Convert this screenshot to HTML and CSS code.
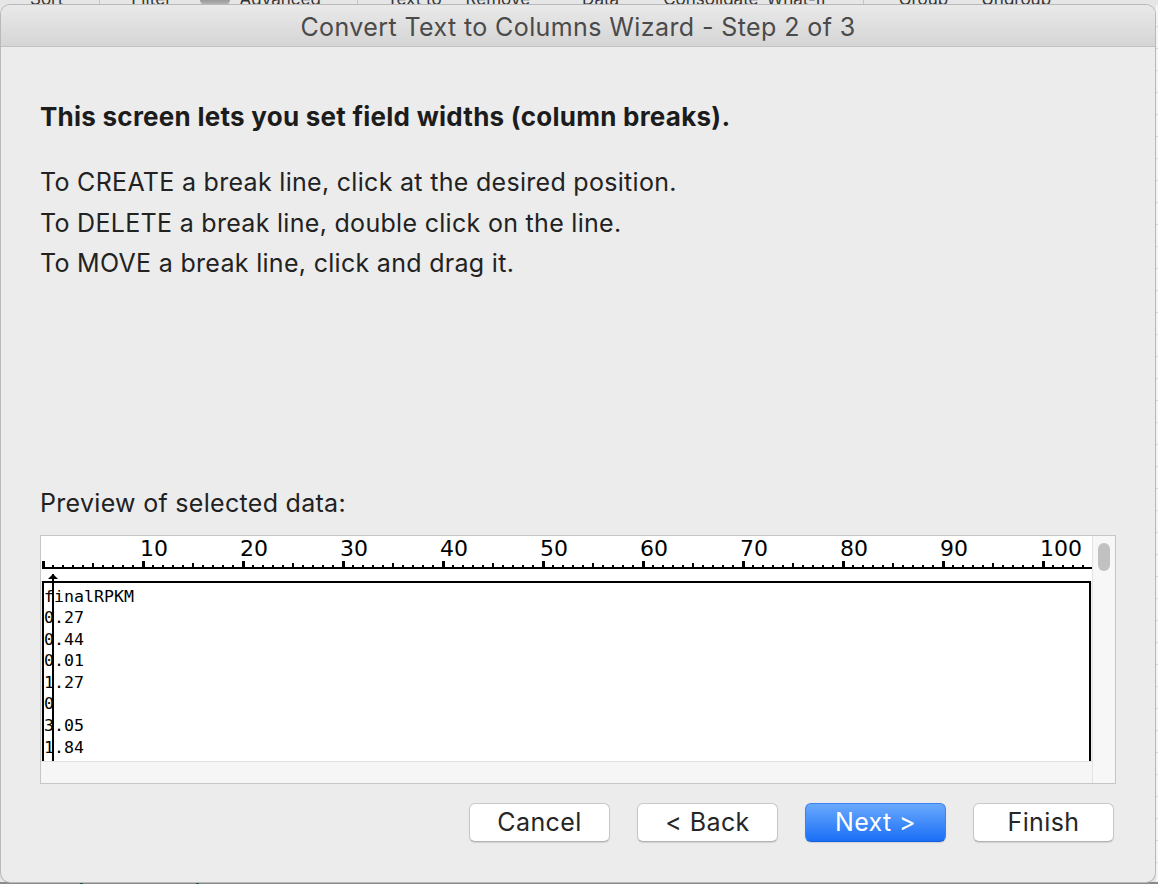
FILE: index.html
```html
<!DOCTYPE html>
<html>
<head>
<meta charset="utf-8">
<title>Convert Text to Columns Wizard - Step 2 of 3</title>
<link rel="stylesheet" href="styles.css">
</head>
<body>
<div class="ribbon">
  <span class="rb r1">Sort</span><span class="rb-div"></span>
  <span class="rb r2">Filter</span><span class="rb-icon"></span>
  <span class="rb r3">Advanced</span><span class="rb-div"></span>
  <span class="rb r4">Text to</span>
  <span class="rb r5">Remove</span>
  <span class="rb r6">Data</span>
  <span class="rb r7">Consolidate</span>
  <span class="rb r8">What-If</span><span class="rb-div"></span>
  <span class="rb r9">Group</span>
  <span class="rb r10">Ungroup</span>
</div>
<div class="stage">
  <div class="window">
    <div class="titlebar">Convert Text to Columns Wizard - Step 2 of 3</div>
    <div class="content">
      <p class="heading">This screen lets you set field widths (column breaks).</p>
      <div class="instructions">
        <p>To CREATE a break line, click at the desired position.</p>
        <p>To DELETE a break line, double click on the line.</p>
        <p>To MOVE a break line, click and drag it.</p>
      </div>
      <p class="preview-label">Preview of selected data:</p>
      <div class="preview">
        <div class="preview-main">
          <div class="ruler">
            <div class="ruler-nums">
              <span>10</span><span>20</span><span>30</span><span>40</span><span>50</span><span>60</span><span>70</span><span>80</span><span>90</span><span>100</span>
            </div>
            <div class="ruler-ticks"></div>
          </div>
          <div class="data">
            <pre class="data-text">finalRPKM
0.27
0.44
0.01
1.27
0
3.05
1.84
0.52
2.11</pre>
          </div>
          <div class="hscroll"></div>
          <div class="break-line"><span class="break-arrow"></span></div>
        </div>
        <div class="vscroll"><div class="thumb"></div></div>
      </div>
      <div class="buttons">
        <button class="btn">Cancel</button>
        <button class="btn">&lt; Back</button>
        <button class="btn btn-primary">Next &gt;</button>
        <button class="btn">Finish</button>
      </div>
    </div>
  </div>
  <div class="sheet-edge"></div>
</div>
<div class="bottom-strip"></div>
</body>
</html>
```
FILE: styles.css
```css
* { box-sizing: border-box; }
html, body { margin: 0; padding: 0; }
body {
  width: 1158px;
  height: 884px;
  overflow: hidden;
  background: #e6e6e6;
  font-family: Inter, "Liberation Sans", Arial, sans-serif;
}
p { margin: 0; }

.ribbon {
  height: 5px;
  overflow: hidden;
  display: flex;
  align-items: flex-start;
  font-size: 17px;
  color: #333;
  background: #e6e6e6;
}
.rb { line-height: 12px; height: 12px; margin-top: -7px; white-space: nowrap; }
.r1 { margin-left: 30px; }
.r2 { margin-left: 31px; }
.r3 { margin-left: 10px; }
.r4 { margin-left: 29px; }
.r5 { margin-left: 24px; }
.r6 { margin-left: 52px; }
.r7 { margin-left: 44px; }
.r8 { margin-left: 8px; }
.r9 { margin-left: 35px; }
.r10 { margin-left: 33px; }
.rb-div { width: 1px; height: 5px; background: #c4c4c4; margin-left: 36px; }
.rb-icon { width: 30px; height: 5px; margin-left: 28px; background: linear-gradient(#9a9a9a, #b8b8b8); border-radius: 0 0 8px 8px; }

.stage { display: flex; height: 877px; }
.window {
  width: 1154px;
  margin-left: 1px;
  height: 877px;
  background: #ececec;
  border-radius: 9px;
  overflow: hidden;
  box-shadow: 0 0 0 1px #b9b9b9;
}
.sheet-edge {
  flex: 1;
  margin-left: 1px;
  background: repeating-linear-gradient(to bottom, #f4f4f4 0 21px, #d8d8d8 21px 22px);
}
.bottom-strip {
  height: 2px;
  background:
    linear-gradient(#1f5f3a, #1f5f3a) 80px 0 / 3px 2px no-repeat,
    linear-gradient(#1f5f3a, #1f5f3a) 196px 0 / 3px 2px no-repeat,
    #8a8a8a;
}

.titlebar {
  height: 42px;
  border-bottom: 1px solid #c2c2c2;
  background: linear-gradient(#e9e9e9, #d5d5d5);
  text-align: center;
  font-size: 25px;
  line-height: 44px;
  color: #4a4a4a;
  letter-spacing: 0.4px;
}

.content { padding: 0 39px 0 39px; }

.heading {
  margin-top: 55px;
  font-weight: 700;
  font-size: 26px;
  line-height: 30px;
  letter-spacing: 0.25px;
  color: #1c1c1c;
}
.instructions { margin-top: 30px; }
.instructions p, .preview-label {
  font-size: 25px;
  line-height: 40.5px;
  letter-spacing: 0.3px;
  color: #222;
}
.preview-label { margin-top: 204px; line-height: 30px; }

.preview {
  margin-top: 17px;
  width: 1076px;
  height: 249px;
  border: 1px solid #c6c6c6;
  display: flex;
}
.preview-main {
  position: relative;
  width: 1051px;
  display: flex;
  flex-direction: column;
}
.ruler {
  height: 45px;
  background: #fff;
  padding-left: 1px;
}
.ruler-nums {
  display: flex;
  padding-top: 2px;
  padding-left: 98px;
  height: 25px;
  font-family: "DejaVu Sans", sans-serif;
  font-size: 22px;
  line-height: 22px;
  color: #000;
}
.ruler-nums span { width: 100px; flex: none; }
.ruler-ticks {
  height: 8px;
  width: 1050px;
  background:
    linear-gradient(#000, #000) left bottom / 100% 2px no-repeat,
    repeating-linear-gradient(to right, #000 0 3px, transparent 3px 100px) left top / 100% 8px no-repeat,
    repeating-linear-gradient(to right, transparent 0 50px, #000 50px 52px, transparent 52px 100px) left bottom / 100% 6px no-repeat,
    repeating-linear-gradient(to right, #000 0 2px, transparent 2px 10px) left bottom / 100% 4px no-repeat;
}
.data {
  height: 180px;
  background: #fff;
  margin: 0 1px;
  overflow: hidden;
  box-shadow: inset 2px 2px 0 #000, inset -2px 0 0 #000;
  padding: 5px 0 0 2px;
}
.data-text {
  margin: 0;
  font-family: "DejaVu Sans Mono", monospace;
  font-size: 16.6px;
  line-height: 21.6px;
  color: #000;
}
.hscroll {
  flex: 1;
  background: #f6f6f6;
  border-top: 1px solid #e2e2e2;
}
.break-line {
  position: absolute;
  left: 11px;
  top: 38px;
  width: 2px;
  height: 187px;
  background: #000;
}
.break-arrow {
  position: absolute;
  left: -4px;
  top: 0;
  width: 0;
  height: 0;
  border-left: 5px solid transparent;
  border-right: 5px solid transparent;
  border-bottom: 5px solid #000;
}
.vscroll {
  flex: 1;
  background: #f7f7f7;
  border-left: 1px solid #e3e3e3;
  padding: 7px 0 0 5px;
}
.thumb {
  width: 12px;
  height: 28px;
  border-radius: 6px;
  background: #c1c1c1;
}

.buttons {
  margin-top: 19px;
  display: flex;
  justify-content: flex-end;
  gap: 27px;
  padding-right: 2px;
}
.btn {
  width: 141px;
  height: 39px;
  border: 1px solid #c8c8c8;
  border-bottom-color: #b4b4b4;
  border-radius: 6px;
  background: #fff;
  box-shadow: 0 1px 1px rgba(0,0,0,0.12);
  font-family: Inter, "Liberation Sans", Arial, sans-serif;
  font-size: 25px;
  letter-spacing: 0.4px;
  color: #262626;
  padding: 0;
  line-height: 37px;
}
.btn-primary {
  border: 1px solid #3a82f2;
  border-bottom-color: #1561de;
  background: linear-gradient(#6aa9fd, #1a6ef6);
  color: #fff;
}
```
